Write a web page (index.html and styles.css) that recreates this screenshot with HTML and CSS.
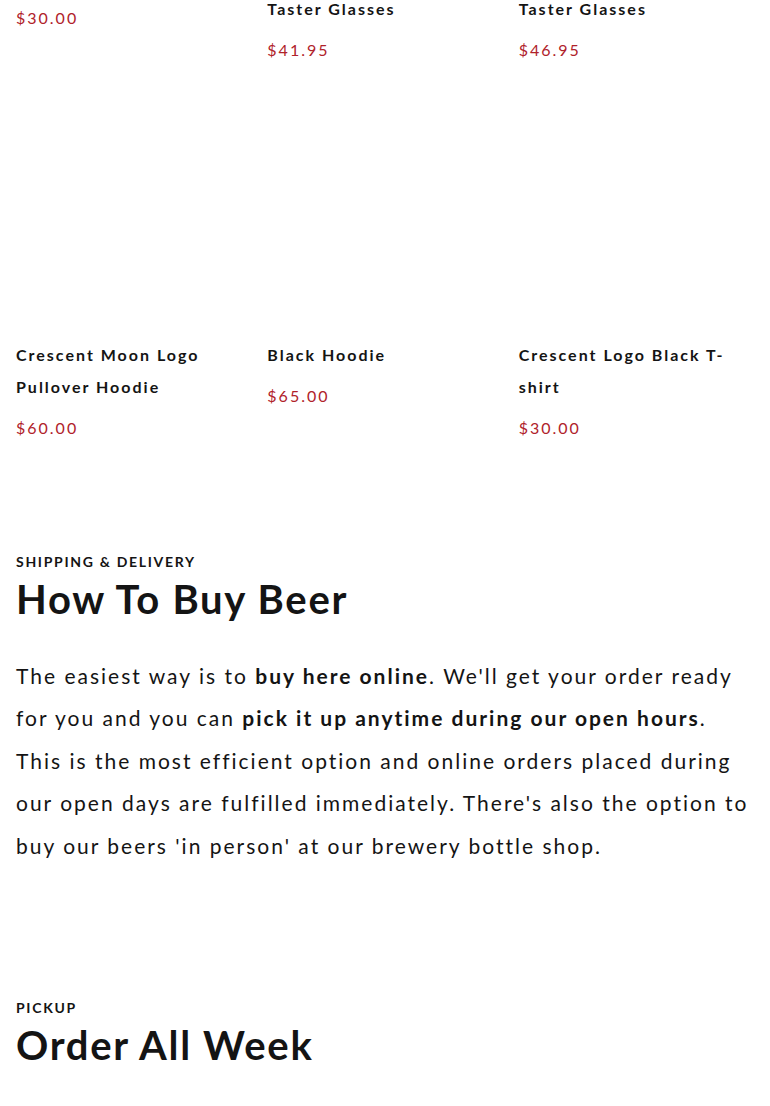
FILE: index.html
```html
<!DOCTYPE html>
<html lang="en">
<head>
<meta charset="utf-8">
<title>Shop</title>
<link rel="stylesheet" href="styles.css">
</head>
<body>
<main class="page">
  <section class="products">
    <div class="grid">
      <article class="card">
        <div class="thumb"></div>
        <h3 class="title">Logo Cap</h3>
        <p class="price">$30.00</p>
      </article>
      <article class="card">
        <div class="thumb"></div>
        <h3 class="title">Crescent Moon Logo Taster Glasses</h3>
        <p class="price">$41.95</p>
      </article>
      <article class="card">
        <div class="thumb"></div>
        <h3 class="title">Crescent Moon Black Taster Glasses</h3>
        <p class="price">$46.95</p>
      </article>
      <article class="card">
        <div class="thumb"></div>
        <h3 class="title">Crescent Moon Logo Pullover Hoodie</h3>
        <p class="price">$60.00</p>
      </article>
      <article class="card">
        <div class="thumb"></div>
        <h3 class="title">Black Hoodie</h3>
        <p class="price">$65.00</p>
      </article>
      <article class="card">
        <div class="thumb"></div>
        <h3 class="title">Crescent Logo Black T-shirt</h3>
        <p class="price">$30.00</p>
      </article>
    </div>
  </section>

  <section class="info">
    <p class="eyebrow">Shipping &amp; Delivery</p>
    <h2 class="heading">How To Buy Beer</h2>
    <p class="body">The easiest way is to <strong>buy here online</strong>. We'll get your order ready for you and you can <strong>pick it up anytime during our open hours</strong>. This is the most efficient option and online orders placed during our open days are fulfilled immediately. There's also the option to buy our beers 'in person' at our brewery bottle shop.</p>
  </section>

  <section class="info info-next">
    <p class="eyebrow">Pickup</p>
    <h2 class="heading">Order All Week</h2>
  </section>
</main>
</body>
</html>
```
FILE: styles.css
```css
html, body {
  margin: 0;
  padding: 0;
  background: #fff;
}
body {
  font-family: Lato, "Noto Sans", sans-serif;
  color: #141414;
}
.page {
  padding: 0 16px;
}
.products {
  margin-top: -286px;
}
.grid {
  display: grid;
  grid-template-columns: repeat(3, 1fr);
  column-gap: 16px;
  row-gap: 25px;
}
.card {
  display: flex;
  flex-direction: column;
}
.thumb {
  aspect-ratio: 1 / 1;
  background: #fff;
}
.title {
  margin: 12px 0 0;
  font-size: 16px;
  line-height: 32px;
  font-weight: 700;
  letter-spacing: 2px;
}
.price {
  margin: 9px 0 0;
  font-size: 16px;
  line-height: 32px;
  letter-spacing: 2px;
  color: #b0222a;
}
.info {
  margin-top: 108px;
}
.info-next {
  margin-top: 131px;
}
.eyebrow {
  margin: 0;
  font-size: 14px;
  line-height: 20px;
  font-weight: 700;
  letter-spacing: 1.7px;
  text-transform: uppercase;
}
.heading {
  margin: 3px 0 0;
  font-size: 40px;
  line-height: 48px;
  font-weight: 700;
  letter-spacing: 1.7px;
}
.body {
  margin: 32px 0 0;
  font-size: 21px;
  line-height: 42.5px;
  letter-spacing: 2px;
}
.body strong {
  font-weight: 700;
}
```
